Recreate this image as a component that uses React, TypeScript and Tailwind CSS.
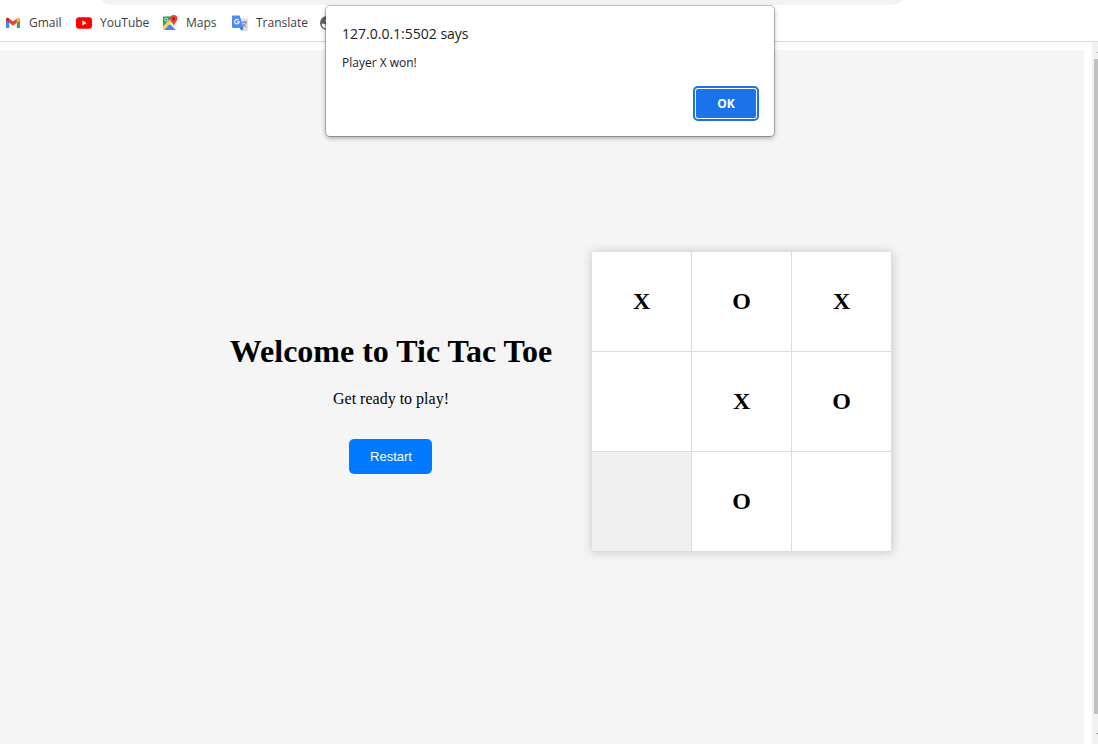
import { useState, type ReactNode } from "react";

function GmailIcon() {
  return (
    <svg viewBox="0 0 16 16" className="size-4 shrink-0" aria-hidden="true">
      <path d="M1 5v7.2c0 .5.4.9.9.9H4.200V7.300z" fill="#4285f4" />
      <path d="M11.800 7.300v5.800h2.300c.5 0 .9-.4.9-.9V5z" fill="#34a853" />
      <path d="M11.800 3.700v4.100L15 5.400V4.200c0-1.300-1.400-1.900-2.400-1.200z" fill="#fbbc04" />
      <path d="M4.200 7.800V3.600L8 6.500l3.800-2.900v4.200L8 10.700z" fill="#ea4335" />
      <path d="M1 4.200v1.200l3.200 2.400V3.600L3.400 3C2.400 2.300 1 2.900 1 4.200z" fill="#c5221f" />
    </svg>
  );
}

function YouTubeIcon() {
  return (
    <svg viewBox="0 0 16 16" className="size-4 shrink-0" aria-hidden="true">
      <rect x="0" y="2.200" width="16" height="11.600" rx="3" fill="#ff0000" />
      <path d="M6.400 5.500 10.700 8l-4.300 2.500z" fill="#fff" />
    </svg>
  );
}

function MapsIcon() {
  return (
    <svg viewBox="0 0 16 16" className="size-4 shrink-0" aria-hidden="true">
      <rect x="1" y="1.500" width="13.500" height="13.500" rx="1" fill="#e8eaed" />
      <path d="M2 1.500h9L1 11.800V2.500a1 1 0 0 1 1-1z" fill="#1fa463" />
      <path d="M1 11.200 10 2l2 3L2 15a1 1 0 0 1-1-1z" fill="#ffd04b" />
      <path d="M2 15l6-6 6 6z" fill="#4285f4" />
      <path d="M8 9l2-2 4.500 4.500V14L14 15z" fill="#f1f3f4" />
      <circle cx="4.200" cy="4.600" r="1.500" fill="none" stroke="#d7f0e2" strokeWidth=".9" />
      <path d="M11.700 0a3.700 3.700 0 0 0-3.700 3.700c0 2.500 2.900 3.600 3.700 7.300.8-3.700 3.700-4.800 3.700-7.300A3.700 3.700 0 0 0 11.700 0z" fill="#ea4335" />
      <circle cx="11.700" cy="3.700" r="1.300" fill="#8c1d18" />
    </svg>
  );
}

function TranslateIcon() {
  return (
    <svg viewBox="0 0 16 16" className="size-4 shrink-0" aria-hidden="true">
      <path d="M7 3.500h8a.8.800 0 0 1 .8.800v10.900a.8.800 0 0 1-.8.800H9.500z" fill="#dadce0" />
      <path d="M9.800 7.200h5.200M12.300 6v1.200M14 7.200c-.4 2.200-1.800 3.800-3.600 4.800M11 8.800c.8 1.500 2 2.500 3.400 3.200" fill="none" stroke="#607d8b" strokeWidth=".9" />
      <path d="M1 .5h6.700L11.500 13H1a1 1 0 0 1-1-1V1.500a1 1 0 0 1 1-1z" fill="#4c8bf5" />
      <path d="M7.800 13h3.700L9.400 15.800z" fill="#3367d6" />
      <path d="M6.700 5.200A2.300 2.300 0 1 0 7.200 6.900H5" fill="none" stroke="#fff" strokeWidth="1.100" />
    </svg>
  );
}

function GlobeIcon() {
  return (
    <svg viewBox="0 0 16 16" className="size-4 shrink-0" aria-hidden="true">
      <circle cx="8" cy="8" r="7" fill="#5f6368" />
      <path d="M2.600 8.800h2.600c1 0 1.800.8 1.800 1.800v2.900C4.600 13.200 2.700 11.300 2.600 8.800zM6.300 5 8.500 2.400c3 0 5.300 2.400 5.300 5.600L11 8.500 9 6.500H6.300z" fill="#fff" />
    </svg>
  );
}

function Bookmark({ icon, label, size }: { icon: ReactNode; label: string; size: string }) {
  return (
    <a href="#" className={`flex items-center gap-2 whitespace-nowrap ${size}`}>
      {icon}
      {label}
    </a>
  );
}

const initialBoard = ["X", "O", "X", "", "X", "O", "", "O", ""];

export default function App() {
  const [board, setBoard] = useState(initialBoard);
  const [open, setOpen] = useState(true);

  return (
    <div className="relative flex min-h-screen flex-col overflow-hidden bg-white text-black">
      <header className="border-b border-[#d9dadc] font-['Open_Sans',sans-serif] text-[12px] text-[#3c4043]">
        <div className="flex h-[5px] items-end overflow-hidden pr-[192px] pl-[98px]">
          <div className="h-7 grow rounded-full bg-[#f1f3f4]" />
        </div>
        <nav aria-label="Bookmarks" className="flex h-9 items-center pl-[5px]">
          <Bookmark icon={<GmailIcon />} label="Gmail" size="w-[71px]" />
          <Bookmark icon={<YouTubeIcon />} label="YouTube" size="w-[86px]" />
          <Bookmark icon={<MapsIcon />} label="Maps" size="w-[70px]" />
          <Bookmark icon={<TranslateIcon />} label="Translate" size="w-[87px]" />
          <GlobeIcon />
        </nav>
      </header>

      <div className="flex grow">
        <main className="mt-2 mr-2 flex grow items-center justify-center bg-[#f5f5f5] pt-[10px] pl-[38px] font-['Liberation_Serif',serif]">
          <section className="mr-10 flex flex-col items-center pt-0.5 text-center">
            <h1 className="text-[32px] leading-9 font-bold">Welcome to Tic Tac Toe</h1>
            <p className="mt-[21px] text-[16px] leading-[18px]">Get ready to play!</p>
            <button
              type="button"
              onClick={() => setBoard(Array(9).fill(""))}
              className="mt-[31px] h-[35px] min-w-[83px] rounded-[5px] bg-[#007bff] px-5 pt-0.5 font-['Liberation_Sans',sans-serif] text-[13px] text-white"
            >
              Restart
            </button>
          </section>
          <section aria-label="Board" className="grid grid-cols-3 shadow-[0_0_10px_rgba(0,0,0,0.2)]">
            {board.map((mark, i) => (
              <button
                key={i}
                type="button"
                aria-label={`Cell ${i + 1}`}
                className={`size-[100px] border-r border-b border-[#dddddd] pb-0.5 text-[24px] font-bold ${i === 6 ? "bg-[#f0f0f0]" : "bg-white"}`}
              >
                {mark}
              </button>
            ))}
          </section>
        </main>
        <div aria-hidden="true" className="flex w-[6px] flex-col overflow-hidden bg-[#f1f1f1] pl-[2px]">
          <svg viewBox="0 0 12 17" className="h-[17px] w-3 shrink-0">
            <path d="M2.500 11 6.500 7l4 4z" fill="#a3a3a3" />
          </svg>
          <div className="mb-[13px] grow bg-[#c1c1c1]" />
          <svg viewBox="0 0 12 17" className="h-[17px] w-3 shrink-0">
            <path d="M2.500 6h8l-4 4z" fill="#505050" />
          </svg>
        </div>
      </div>

      {open && (
        <div
          role="alertdialog"
          aria-labelledby="alert-title"
          aria-describedby="alert-text"
          className="absolute top-[6px] left-[326px] flex w-[448px] flex-col rounded-[4px] bg-white px-4 pt-4 pb-[18px] font-['Open_Sans',sans-serif] text-[#202124] shadow-[0_0_0_1px_rgba(0,0,0,0.22),0_2px_5px_rgba(0,0,0,0.35)]"
        >
          <h2 id="alert-title" className="text-[14px] leading-6">127.0.0.1:5502 says</h2>
          <p id="alert-text" className="mt-[7px] text-[12px] leading-5">Player X won!</p>
          <button
            type="button"
            onClick={() => setOpen(false)}
            className="mt-4 mr-[2px] h-[29px] w-[60px] self-end rounded-[2px] bg-[#1a73e8] text-[12px] font-bold text-white shadow-[0_0_0_1px_#ffffff,0_0_0_3px_#1a73e8]"
          >
            OK
          </button>
        </div>
      )}
    </div>
  );
}
